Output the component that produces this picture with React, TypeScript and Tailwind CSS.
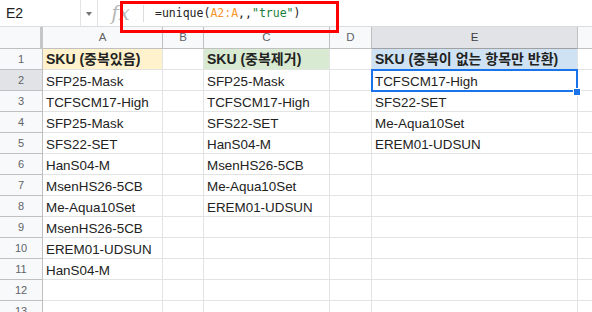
import React from "react";

const cols = ["A", "B", "C", "D", "E"];
const colA = ["SFP25-Mask","TCFSCM17-High","SFP25-Mask","SFS22-SET","HanS04-M","MsenHS26-5CB","Me-Aqua10Set","MsenHS26-5CB","EREM01-UDSUN","HanS04-M","",""];
const colC = ["SFP25-Mask","TCFSCM17-High","SFS22-SET","HanS04-M","MsenHS26-5CB","Me-Aqua10Set","EREM01-UDSUN","","","","",""];
const colE = ["TCFSCM17-High","SFS22-SET","Me-Aqua10Set","EREM01-UDSUN","","","","","","","",""];

const grid = "grid grid-cols-[43px_120px_41px_126px_42px_206px_1fr]";

export default function App() {
  return (
    <div className="relative w-[592px] h-[312px] overflow-hidden bg-white text-[#222222]" style={{ fontFamily: '"Liberation Sans", Arial, "Noto Sans CJK KR", sans-serif' }}>
      {/* formula bar */}
      <div className="flex h-[27px] items-center border-b border-[#dadce0]">
        <div className="w-[81px] pl-[6px] text-[14px] border-r border-[#e3e3e3] h-full flex items-center">E2</div>
        <div className="w-[17px] h-full flex items-center justify-center border-r border-[#e3e3e3]">
          <div className="w-0 h-0 border-l-[3.5px] border-r-[3.5px] border-t-[4px] border-l-transparent border-r-transparent border-t-[#757575] mt-[1px]" />
        </div>
        <div className="w-[45px] h-full flex items-center justify-center">
          <span className="italic text-[20px] leading-none text-[#b8b8b8]" style={{ fontFamily: '"DejaVu Serif", "Liberation Serif", serif' }}>fx</span>
        </div>
        <div className="w-px h-[17px] bg-[#dadce0]" />
        <div className="pl-[11px] text-[11.5px] pt-[1px]" style={{ fontFamily: '"DejaVu Sans Mono", "Liberation Mono", monospace' }}>
          <span>=unique(</span><span className="text-[#f5962a]">A2:A</span><span>,,</span><span className="text-[#188038]">"true"</span><span>)</span>
        </div>
      </div>
      {/* column headers */}
      <div className={`${grid} h-[22px] bg-[#f8f9fa] text-[11.5px] text-[#5f6368]`}>
        <div className="border-r-[3px] border-r-[#c4c7c5] border-b border-b-[#c0c0c0]" />
        {cols.map((c) => (
          <div key={c} className={`flex items-center justify-center border-r border-[#c0c0c0] border-b ${c === "E" ? "bg-[#e1e3e6] text-[#3c4043] border-b-[#a0a0a0]" : "border-b-[#c0c0c0]"}`}>{c}</div>
        ))}
        <div className="border-b border-[#c0c0c0]" />
      </div>
      {/* rows */}
      {Array.from({ length: 13 }).map((_, i) => {
        const r = i + 1;
        const isHead = r === 1;
        const a = isHead ? "SKU (중복있음)" : colA[i - 1] ?? "";
        const c = isHead ? "SKU (중복제거)" : colC[i - 1] ?? "";
        const e = isHead ? "SKU (중복이 없는 항목만 반환)" : colE[i - 1] ?? "";
        const cell = `border-r border-b border-[#e2e3e3] pl-[3px] flex items-center whitespace-nowrap overflow-hidden ${isHead ? "text-[14px] font-bold" : "text-[13.4px] pt-[4px]"}`;
        return (
          <div key={r} className={`${grid} h-[21px]`}>
            <div className={`flex items-center justify-center text-[11px] text-[#5f6368] border-r border-b border-[#c0c0c0] ${r === 2 ? "bg-[#e1e3e6]" : "bg-[#f8f9fa]"}`}>{r}</div>
            <div className={`${cell} ${isHead ? "bg-[#fff2cc]" : ""}`}>{a}</div>
            <div className={cell} />
            <div className={`${cell} ${isHead ? "bg-[#d9ead3]" : ""}`}>{c}</div>
            <div className={cell} />
            <div className={`${cell} ${isHead ? "bg-[#cfe2f3]" : ""}`}>{e}</div>
            <div className="border-b border-[#e2e3e3]" />
          </div>
        );
      })}
      {/* selection */}
      <div className="absolute left-[371px] top-[69px] w-[207px] h-[23px] border-2 border-[#1a73e8] pointer-events-none" />
      <div className="absolute left-[573px] top-[88px] w-[6px] h-[6px] bg-[#1a73e8] border border-white box-content" />
      {/* red annotation box */}
      <div className="absolute left-[120px] top-[1px] w-[219px] h-[32px] border-[3px] border-[#ff0000]" />
    </div>
  );
}
